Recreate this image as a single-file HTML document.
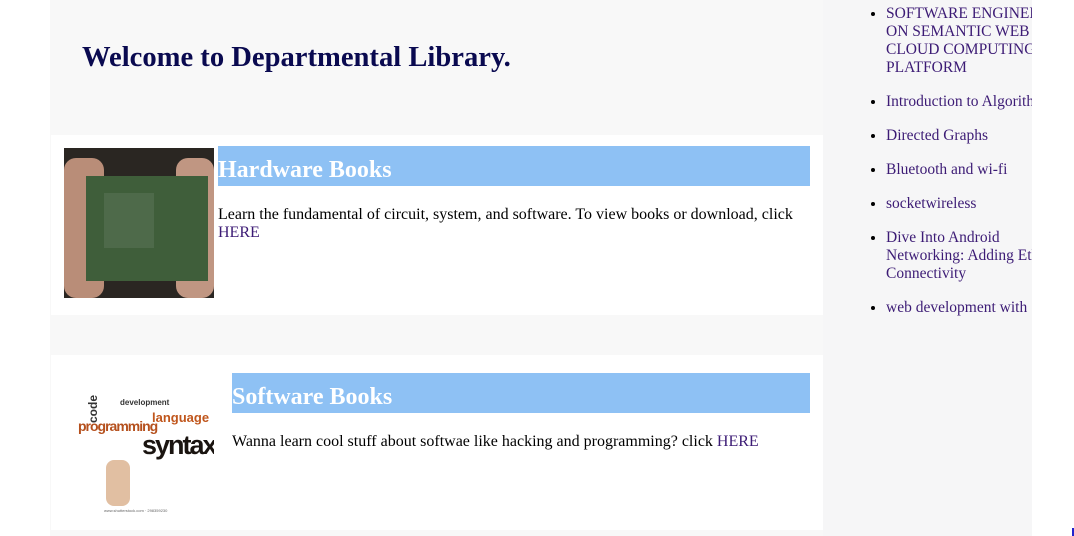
<!DOCTYPE html>
<html><head><meta charset="utf-8"><style>
*{margin:0;padding:0;box-sizing:border-box}
body{width:1074px;height:536px;overflow:hidden;background:#fff;font-family:"Liberation Serif",serif;position:relative}
.main{position:absolute;left:50px;top:0;width:773px;height:536px;background:#f8f8f8}
.side{position:absolute;left:823px;top:0;width:209px;height:536px;background:#f6f6f7}
h1{position:absolute;left:82px;top:42px;font-size:28.6px;color:#0a0a50;font-weight:bold}
.card{position:absolute;left:51px;width:772px;background:#fff}
.hd{position:absolute;background:#8ec1f4;color:#fff;font-size:24px;font-weight:bold;height:40px;line-height:48px}
.tx{position:absolute;font-size:16px;line-height:18px;color:#000}
a{color:#3c1b75;text-decoration:none}
ul{position:absolute;left:864px;top:5px;width:168px;overflow:hidden;list-style:disc;font-size:15.5px;line-height:18px;color:#3c1b75;white-space:nowrap;padding-left:22px}
ul li{margin-bottom:16px}
ul li::marker{color:#000}
</style></head><body>
<div class="main"></div>
<div class="side"></div>
<h1>Welcome to Departmental Library.</h1>
<div class="card" style="top:135px;height:180px">
  <div style="position:absolute;left:13px;top:13px;width:150px;height:150px;background:#2a2622;overflow:hidden">
    <div style="position:absolute;left:0;top:10px;width:40px;height:140px;background:#b98d78;border-radius:12px"></div>
    <div style="position:absolute;left:112px;top:10px;width:38px;height:140px;background:#c09682;border-radius:12px"></div>
    <div style="position:absolute;left:22px;top:28px;width:122px;height:105px;background:#3f5e3a"></div>
    <div style="position:absolute;left:40px;top:45px;width:50px;height:55px;background:#4e6a4a"></div>
  </div>
  <div class="tx" style="left:167px;top:71px">Learn the fundamental of circuit, system, and software. To view books or download, click<br><a>HERE</a></div>
  <div class="hd" style="left:167px;top:11px;width:592px">Hardware Books</div>
</div>
<div class="card" style="top:355px;height:175px">
  <div style="position:absolute;left:13px;top:13px;width:150px;height:150px;background:#fff;overflow:hidden;font-family:'Liberation Sans',sans-serif;font-weight:bold">
    <div style="position:absolute;left:14px;top:50px;font-size:14px;color:#b5501d;letter-spacing:-1px">programming</div>
    <div style="position:absolute;left:78px;top:62px;font-size:27px;color:#1a1410;letter-spacing:-2px">syntax</div>
    <div style="position:absolute;left:88px;top:42px;font-size:13px;color:#c0561c">language</div>
    <div style="position:absolute;left:56px;top:30px;font-size:8px;color:#333">development</div>
    <div style="position:absolute;left:22px;font-size:12px;color:#333;transform:rotate(-90deg);transform-origin:left top;top:55px">code</div>
    <div style="position:absolute;left:42px;top:92px;width:24px;height:46px;background:#e1bfa2;border-radius:8px"></div>
    <div style="position:absolute;left:40px;top:140px;font-size:4px;color:#666;font-weight:normal">www.shutterstock.com · 298359230</div>
  </div>
  <div class="hd" style="left:181px;top:18px;width:578px">Software Books</div>
  <div class="tx" style="left:181px;top:78px">Wanna learn cool stuff about softwae like hacking and programming? click <a>HERE</a></div>
</div>
<ul>
<li>SOFTWARE ENGINEERING<br>ON SEMANTIC WEB AND<br>CLOUD COMPUTING<br>PLATFORM</li>
<li>Introduction to Algorithms</li>
<li>Directed Graphs</li>
<li>Bluetooth and wi-fi</li>
<li>socketwireless</li>
<li>Dive Into Android<br>Networking: Adding Ethernet<br>Connectivity</li>
<li>web development with</li>
</ul>
<div style="position:absolute;left:1072px;top:528px;width:2px;height:8px;background:#2222cc"></div>
</body></html>
